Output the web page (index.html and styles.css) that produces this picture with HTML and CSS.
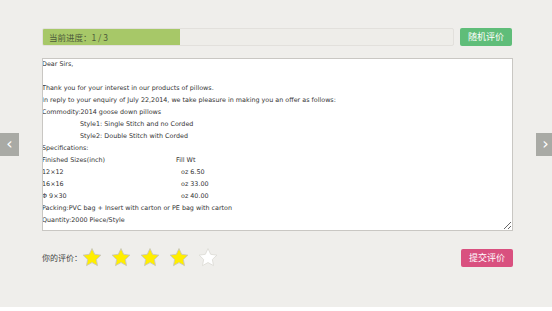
FILE: index.html
```html
<!DOCTYPE html>
<html>
<head>
<meta charset="utf-8">
<link rel="stylesheet" href="styles.css">
</head>
<body>
<div class="stage">
  <div class="wrap">
    <div class="toprow">
      <div class="progress">
        <div class="fill" style="width:33.4%"></div>
        <span class="plabel">当前进度：1 / 3</span>
      </div>
      <button class="btn green">随机评价</button>
    </div>
    <div class="letter">
      <div class="ln">Dear Sirs,</div>
      <div class="ln">&nbsp;</div>
      <div class="ln">Thank you for your interest in our products of pillows.</div>
      <div class="ln">In reply to your enquiry of July 22,2014, we take pleasure in making you an offer as follows:</div>
      <div class="ln">Commodity:2014 goose down pillows</div>
      <div class="ln ind">Style1: Single Stitch and no Corded</div>
      <div class="ln ind">Style2: Double Stitch with Corded</div>
      <div class="ln">Specifications:</div>
      <div class="ln"><span class="c1">Finished Sizes(inch)</span>Fill Wt</div>
      <div class="ln"><span class="c2">12×12</span>oz 6.50</div>
      <div class="ln"><span class="c2">16×16</span>oz 33.00</div>
      <div class="ln"><span class="c2">Φ 9×30</span>oz 40.00</div>
      <div class="ln">Packing:PVC bag + Insert with carton or PE bag with carton</div>
      <div class="ln">Quantity:2000 Piece/Style</div>
    </div>
    <div class="rate">
      <span class="rlabel">你的评价：</span>
      <div class="stars">
        <svg class="star on" viewBox="0 0 24 24"><path d="M12 1.8l3.1 6.6 7.1.9-5.2 4.9 1.3 7.1L12 17.8l-6.3 3.5 1.3-7.1L1.8 9.3l7.1-.9z"/></svg>
        <svg class="star on" viewBox="0 0 24 24"><path d="M12 1.8l3.1 6.6 7.1.9-5.2 4.9 1.3 7.1L12 17.8l-6.3 3.5 1.3-7.1L1.8 9.3l7.1-.9z"/></svg>
        <svg class="star on" viewBox="0 0 24 24"><path d="M12 1.8l3.1 6.6 7.1.9-5.2 4.9 1.3 7.1L12 17.8l-6.3 3.5 1.3-7.1L1.8 9.3l7.1-.9z"/></svg>
        <svg class="star on" viewBox="0 0 24 24"><path d="M12 1.8l3.1 6.6 7.1.9-5.2 4.9 1.3 7.1L12 17.8l-6.3 3.5 1.3-7.1L1.8 9.3l7.1-.9z"/></svg>
        <svg class="star off" viewBox="0 0 24 24"><path d="M12 1.8l3.1 6.6 7.1.9-5.2 4.9 1.3 7.1L12 17.8l-6.3 3.5 1.3-7.1L1.8 9.3l7.1-.9z"/></svg>
      </div>
      <button class="btn pink">提交评价</button>
    </div>
  </div>
  <div class="arrow left">‹</div>
  <div class="arrow right">›</div>
</div>
</body>
</html>
```
FILE: styles.css
```css
html, body {
  margin: 0;
  padding: 0;
  background: #ffffff;
}
.stage {
  position: relative;
  height: 307px;
  background: #efeeeb;
  overflow: hidden;
}
.wrap {
  width: 471px;
  margin-left: 42px;
  padding-top: 28px;
  display: flex;
  flex-direction: column;
}
.toprow {
  display: flex;
  align-items: center;
  gap: 6px;
  height: 18px;
}
.progress {
  position: relative;
  flex: 0 0 412px;
  height: 18px;
  box-sizing: border-box;
  border: 1px solid #e2e0dc;
  border-radius: 2px;
  background: #eeede9;
  display: flex;
  align-items: center;
  overflow: hidden;
}
.fill {
  position: absolute;
  left: 0;
  top: 0;
  bottom: 0;
  background: #a7c868;
}
.plabel {
  position: relative;
  padding-left: 6px;
  font-family: "Noto Sans CJK SC", sans-serif;
  font-size: 8.5px;
  color: #4d5a3a;
}
.btn {
  border: none;
  border-radius: 2px;
  width: 52px;
  height: 18px;
  padding: 0;
  color: #ffffff;
  font-family: "Noto Sans CJK SC", sans-serif;
  font-size: 9px;
  line-height: 18px;
}
.green { background: #5fbd79; }
.pink { background: #d9507f; }
.letter {
  margin-top: 12px;
  height: 173px;
  box-sizing: border-box;
  border: 1px solid #c9c7c3;
  background: #ffffff;
  padding: 0;
  resize: both;
  overflow: auto;
  font-family: "DejaVu Sans", sans-serif;
  font-size: 6.4px;
  line-height: 12px;
  color: #333333;
  white-space: nowrap;
}
.ln { height: 12px; margin-left: -1px; margin-top: -1px; margin-bottom: 1px; }
.ind { padding-left: 38px; }
.c1 { display: inline-block; width: 134px; }
.c2 { display: inline-block; width: 139px; }
.rate {
  margin-top: 17px;
  display: flex;
  align-items: center;
  height: 19px;
}
.rlabel {
  font-family: "Noto Sans CJK SC", sans-serif;
  font-size: 8px;
  color: #444;
  white-space: nowrap;
  margin-right: -1px;
}
.stars {
  display: flex;
  gap: 7px;
  flex: 1;
}
.star {
  width: 22px;
  height: 21px;
  display: block;
}
.star path {
  stroke: #c8c6c0;
  stroke-width: 1;
  stroke-linejoin: round;
}
.star.on path { fill: #ffee00; }
.star.off path { fill: #ffffff; stroke: #dddbd6; }
.arrow {
  position: absolute;
  top: 133px;
  width: 19px;
  height: 23px;
  background: #a9aaa5;
  color: #ffffff;
  font-family: "DejaVu Sans", sans-serif;
  font-size: 16px;
  line-height: 21px;
  text-align: center;
}
.arrow.left { left: 0; }
.arrow.right { left: 536px; }
```
